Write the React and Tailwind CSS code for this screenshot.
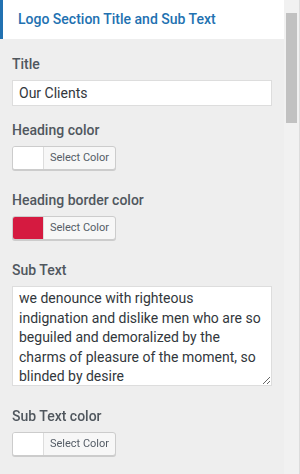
import React from "react";

const subText =
    "we denounce with righteous indignation and dislike men who are so beguiled and demoralized by the charms of pleasure of the moment, so blinded by desire";

const ColorButton = ({ color }) => (
    <button className="flex h-[24px] w-[104px] shrink-0 items-stretch overflow-hidden rounded-[3px] border border-[#cccccc] bg-[#f7f7f7] shadow-[0_1px_0_#cccccc]">
        <span className="w-[31px] border-r border-[#dddddd]" style={{ backgroundColor: color }} />
        <span className="flex flex-1 items-center justify-center text-[11px] text-[#555d66]">Select Color</span>
    </button>
);

const Label = ({ children }) => (
    <div className="mb-[7px] text-[14px] font-medium leading-[18px] text-[#50575e]">{children}</div>
);

export default function App() {
    return (
        <div className="flex h-[474px] w-[300px] overflow-hidden bg-[#eeeeee] font-['Roboto',sans-serif]">
            <div className="flex w-[284px] shrink-0 flex-col">
                {/* header */}
                <div className="flex h-[39px] shrink-0 items-center border-l-[3px] border-[#2271b1] bg-white pl-[15px]">
                    <span className="text-[14px] font-medium text-[#2271b1]">Logo Section Title and Sub Text</span>
                </div>

                <div className="flex shrink-0 flex-col px-[12px] pt-[16px]">
                    <Label>Title</Label>
                    <input
                        type="text"
                        defaultValue="Our Clients"
                        className="h-[26px] w-[260px] border border-[#dddddd] bg-white px-[6px] text-[14px] text-[#32373c] outline-none"
                    />

                    <div className="mt-[15px]">
                        <Label>Heading color</Label>
                        <ColorButton color="#ffffff" />
                    </div>

                    <div className="mt-[21px]">
                        <Label>Heading border color</Label>
                        <ColorButton color="#d51a40" />
                    </div>

                    <div className="mt-[21px]">
                        <Label>Sub Text</Label>
                        <textarea
                            defaultValue={subText}
                            className="block h-[100px] w-[260px] resize-y border border-[#dddddd] bg-white px-[6px] pt-[2px] pb-0 text-[14px] leading-[19.5px] text-[#32373c] outline-none"
                        />
                    </div>

                    <div className="mt-[21px]">
                        <Label>Sub Text color</Label>
                        <ColorButton color="#ffffff" />
                    </div>
                </div>
            </div>

            {/* scrollbar */}
            <div className="flex w-[16px] shrink-0 flex-col border-r border-[#dcdcdc] bg-[#f1f1f1] pt-[13px]">
                <div className="mx-auto h-[110px] w-[11px] shrink-0 bg-[#c1c1c1]" />
            </div>
        </div>
    );
}
